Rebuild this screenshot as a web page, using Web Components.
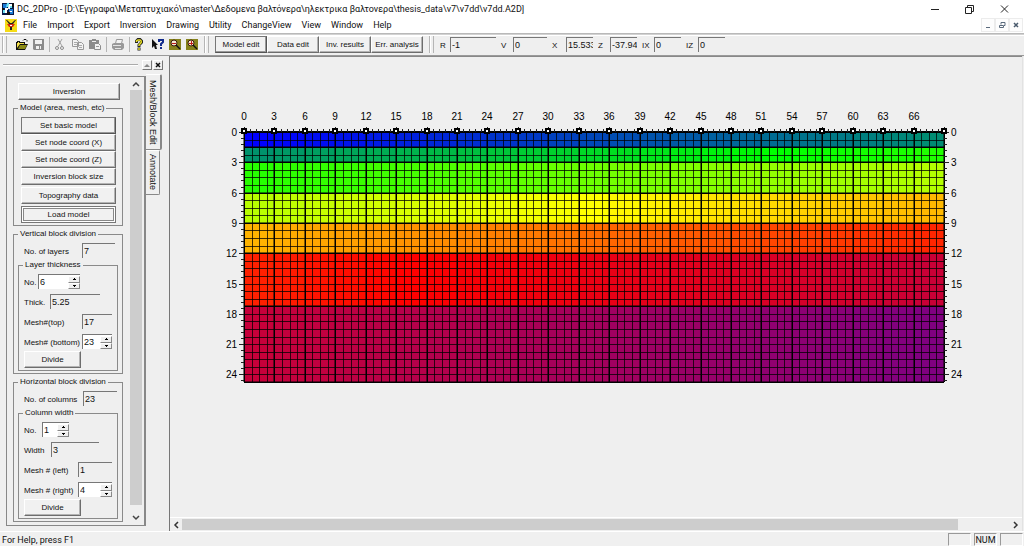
<!DOCTYPE html>
<html lang="en">
<head>
<meta charset="utf-8">
<title>DC_2DPro</title>
<style>
html, body { margin: 0; height: 100%; }
body { font: 9px/12px Roboto, "Noto Sans", sans-serif; color: #111; background: #efefef; }
</style>
</head>
<body>
<app-window></app-window>
<script>
const DIALOG = '8px/12px "Liberation Sans", Arial, sans-serif';
const VALUE = '9px/12px "Liberation Sans", Arial, sans-serif';

function define(name, render, ready) {
  customElements.define(name, class extends HTMLElement {
    connectedCallback() {
      if (this.shadowRoot) return;
      const root = this.attachShadow({ mode: 'open' });
      root.innerHTML = '<style>*{box-sizing:border-box}</style>' + render(this);
      if (ready) ready(this, root);
    }
  });
}

/* Raised push button; "current" draws the pressed-default frame. */
define('win-button', el => `
<style>
:host { display: block; }
button { width: 100%; height: 17px; padding: 0; margin: 0; display: block; font: ${DIALOG}; line-height: 15px; color: #111; white-space: nowrap;
  background: #f1f1f1; border: 1px solid; border-color: #fff #6d6d6d #6d6d6d #fff; border-radius: 0; box-shadow: inset -1px -1px #b4b4b4; }
:host([current]) button { border-color: #777 #555 #555 #777; box-shadow: inset -1px -1px #999; }
:host([focused]) button { border-color: #777; box-shadow: inset 1px 1px #fff, inset -1px -1px #fff, inset 2px 2px #888, inset -2px -2px #888; }
</style>
<button type="button"><slot></slot></button>`);

/* Label and sunken edit box, with optional spin arrows. */
define('edit-field', el => `
<style>
:host { display: flex; align-items: center; font: ${DIALOG}; height: 15px; }
label { flex: 1; white-space: nowrap; padding-top: 2px; }
.box { display: flex; flex: none; width: var(--w, 30px); height: 15px; border-top: 1px solid #777; border-left: 1px solid #777; }
:host([spin]) .box { background: #fff; }
input { flex: 1; min-width: 0; width: 0; height: 13px; border: 0; padding: 0 0 0 1px; background: none; font: ${VALUE}; color: #111; outline: 0; }
.spin { display: flex; flex-direction: column; width: 12px; margin: 1px 0 0; }
.spin button { flex: 1; padding: 0; margin: 0; border: 1px solid; border-color: #fff #888 #888 #fff; background: #efefef; display: flex; align-items: center; justify-content: center; }
svg { display: block; }
</style>
<label for="f">${el.getAttribute('label')}</label>
<div class="box"><input id="f" value="${el.getAttribute('value')}">${el.hasAttribute('spin') ? `
<div class="spin"><button type="button" aria-label="Increase"><svg width="3" height="2"><path d="M1 0h1v1h1v1H0V1h1z"/></svg></button><button type="button" aria-label="Decrease"><svg width="3" height="2"><path d="M0 0h3v1H2v1H1V1H0z"/></svg></button></div>` : ''}</div>`);

define('group-box', el => `
<style>
:host { display: block; min-width: 0; font: ${DIALOG}; }
fieldset { margin: 0; min-width: 0; border: 1px solid #8a8a8a; padding: var(--pad, 3px 4px 2px 4px); }
legend { padding: 0 2px; margin-left: 0; height: 12px; white-space: nowrap; }
</style>
<fieldset><legend>${el.getAttribute('legend')}</legend><slot></slot></fieldset>`);

define('title-bar', () => `
<style>
:host { display: flex; align-items: center; height: 17px; padding: 0 15px 0 2px; background: #fff; }
.logo { flex: none; margin-right: 3px; }
h1 { flex: 1; margin: 0; font: inherit; white-space: nowrap; overflow: hidden; }
.ctl { display: flex; gap: 26px; }
button { width: 9px; height: 12px; padding: 0; border: 0; background: none; }
button svg { display: block; }
</style>
<svg class="logo" width="12" height="12" viewBox="0 0 12 12"><path fill="#071a48" d="M0 0h12v12H0z"/><path fill="#1c7cd6" d="M1 1h4v4H1zM7 6h4v5H7z"/><path fill="#6be0f0" d="M5 0h2v3h3v2H6V4H4zM1 7h4v3H1z"/><path fill="#fff" d="M7 1h3v2H8v3H6zM3 5h3v2H5v3H3zM8 8h2v1H8z"/><path fill="#101010" d="M10 0h2v4h-2zM0 5h2v2H0zM5 9h3v3H5z"/></svg>
<h1>DC_2DPro - [D:\\Έγγραφα\\Μεταπτυχιακό\\master\\Δεδομενα βαλτόνερα\\ηλεκτρικα βαλτονερα\\thesis_data\\v7\\v7dd\\v7dd.A2D]</h1>
<div class="ctl">
<button aria-label="Minimize"><svg width="9" height="12"><path stroke="#222" d="M1 6.5h8"/></svg></button>
<button aria-label="Restore"><svg width="9" height="12" fill="none" stroke="#222"><path d="M.5 4.5h6v6h-6zM2.500 4V2.500h6v6H7"/></svg></button>
<button aria-label="Close"><svg width="9" height="12" stroke="#222"><path d="M1 2.500l7 7M8 2.500l-7 7"/></svg></button>
</div>`);

define('menu-bar', () => `
<style>
:host { display: flex; align-items: center; height: 16px; padding-left: 5px; background: #fff; }
svg { display: block; flex: none; }
nav { display: flex; flex: 1; margin-left: 6px; gap: 10px; }
a { color: inherit; text-decoration: none; white-space: nowrap; }
.mdi { display: flex; margin-right: 1px; }
.mdi button { width: 14px; height: 14px; margin: 0; padding: 2px; border: 1px solid #ececec; background: #fdfdfd; }
</style>
<svg width="12" height="13" viewBox="0 0 12 13"><path fill="#f5dc16" d="M0 0h12v13H0z"/><path fill="#7a6500" d="M3 2l3 3 3-3-2 5v4H5V7z"/><path fill="#d62d12" d="M2 5h8l-2 3H4z"/><path fill="#222" d="M1 1h1l3 3h2l3-3h1L8 5H4zM5 8h2v3H5z"/><path fill="#fff" d="M5 6h2v1H5z"/></svg>
<nav>${['File','Import','Export','Inversion','Drawing','Utility','ChangeView','View','Window','Help'].map(t => `<a href="#">${t}</a>`).join('')}</nav>
<div class="mdi">
<button aria-label="Minimize document"><svg width="8" height="8"><path stroke="#5a6a7c" d="M2 6.500h4"/></svg></button>
<button aria-label="Restore document"><svg width="8" height="8" fill="none" stroke="#5a6a7c"><path d="M1.500 4.500h4v2h-4zM3 3.500v-2h4v3H6"/></svg></button>
<button aria-label="Close document"><svg width="8" height="8" stroke="#4a5a6c" stroke-width="1.500"><path d="M2 2l4 4M6 2l-4 4"/></svg></button>
</div>`);

const TOOLS = [
  ['Open', 12, '<path fill="#111" d="M0 4h1V3h3v1h5v2h3l-3 6H0z"/><path fill="#f4e04a" d="M1 5h1V4h1v1h5v1H4l-3 4z"/><path fill="#8b8a16" d="M4 7h7l-2 4H2z"/><path fill="none" stroke="#111" d="M7 2.500l1-1h2l1 1v1"/>', 5],
  ['Save', 11, '<path fill="#8c8c8c" d="M0 1h11v11H1l-1-1z"/><path fill="#f2f2f2" d="M2 2h7v4H2zM3 8h5v3H3z"/><path fill="#8c8c8c" d="M6 8h1v3H6z"/>', 0],
  null,
  ['Cut', 10, '<path fill="none" stroke="#a2a2a2" d="M3 1l4 7M7 1L3 8"/><circle cx="2" cy="10" r="1.500" fill="none" stroke="#8c8c8c"/><circle cx="7" cy="10" r="1.500" fill="none" stroke="#8c8c8c"/>', 7],
  ['Copy', 12, '<path fill="#f2f2f2" stroke="#999" d="M.5 1.500h4l2 2v5h-6zM5.500 4.500h4l2 2v5h-6z"/><path stroke="#aaa" d="M2 4.500h3M2 6.500h3M7 7.500h3M7 9.500h3"/>', 5],
  ['Paste', 12, '<path fill="#8c8c8c" d="M0 2h3V1h4v1h3v9H0z"/><path fill="#eee" d="M3 3h4v1H3z"/><path fill="#f2f2f2" stroke="#8c8c8c" d="M5.500 5.500h4l2 2v4h-6z"/><path stroke="#999" d="M7 8.500h3"/>', 0],
  null,
  ['Print', 12, '<path fill="#f2f2f2" stroke="#999" d="M3.500 5.500l1-4h6l-1 4z"/><path fill="#999" d="M0 6l2-1h9l1 1v4l-2 2H2l-2-2z"/><path fill="#e4e4e4" d="M1 7h8v1H1zM3 10h6v1H3z"/>', 0],
  null,
  ['Help', 8, '<path fill="none" stroke="#222" stroke-width="3" d="M1.500 5V3l1.500-1.500h2L6.500 3v1.500L4 7v2M4 9.500v3"/><path fill="none" stroke="#e8e020" stroke-width="1.500" d="M1.500 4V3L3 2h2l1.200 1v1.500L4 7v1M4 10v2"/>', 9],
  ['Context help', 12, '<path fill="#111" d="M0 1l6 6H4l1 4H3L2 8l-2 2z"/><path fill="none" stroke="#122c8c" stroke-width="2" d="M7 4V2h4v2L9 6v2M9 9v2"/>', 5],
  ['Zoom out', 12, '<path fill="#86821c" d="M0 1h12v11H0z"/><circle cx="5" cy="5" r="3" fill="#f3e7d2" stroke="#3c1c0c"/><path stroke="#c01818" d="M3 5.500h4"/><path stroke="#111" stroke-width="1.500" d="M7 7l4 4"/>', 5],
  ['Zoom in', 12, '<path fill="#86821c" d="M0 1h12v11H0z"/><circle cx="5" cy="5" r="3" fill="#f3e7d2" stroke="#3c1c0c"/><path stroke="#c01818" d="M3 5.500h4M5.500 3v4"/><path stroke="#111" stroke-width="1.500" d="M7 7l4 4"/>', 0]
];

define('tool-bar', () => `
<style>
:host { display: flex; align-items: center; height: 23px; background: #efefef; border-top: 1px solid #b9b9b9; border-bottom: 1px solid #9a9a9a; box-shadow: inset 0 1px #d2d2d2, inset 0 2px #fff; font: ${DIALOG}; }
.grip { flex: none; width: 5px; height: 17px; border: solid #b5b5b5; border-width: 0 1px; box-shadow: inset 1px 0 #fff; }
.icons, .modes, .fields { display: flex; align-items: center; flex: none; }
.icons { width: 185px; margin-left: 9px; }
.icons button { padding: 0; border: 0; background: none; }
.icons svg { display: block; }
.icons i { width: 1px; height: 15px; margin: 0 5px; background: #b5b5b5; }
.modes { margin: 0 6px 0 6px; }
.modes win-button { width: 52px; }
.fields { margin-left: 6px; gap: 5px; }
.fields edit-field { width: var(--f); }
</style>
<div class="grip" style="margin-left:2px"></div>
<div class="icons">${TOOLS.map(t => t ? `<button type="button" aria-label="${t[0]}" style="margin-right:${t[3]}px"><svg width="${t[1]}" height="13">${t[2]}</svg></button>` : '<i></i>').join('')}</div>
<div class="grip" style="margin-left:3px"></div>
<div class="modes"><win-button current>Model edit</win-button><win-button>Data edit</win-button><win-button>Inv. results</win-button><win-button>Err. analysis</win-button></div>
<div class="grip"></div>
<div class="fields">
<edit-field label="R" value="-1" style="--f:56px;--w:46px"></edit-field>
<edit-field label="V" value="0" style="--f:46px;--w:34px"></edit-field>
<edit-field label="X" value="15.533" style="--f:41px;--w:27px"></edit-field>
<edit-field label="Z" value="-37.94" style="--f:39px;--w:27px"></edit-field>
<edit-field label="IX" value="0" style="--f:39px;--w:27px"></edit-field>
<edit-field label="IZ" value="0" style="--f:39px;--w:27px"></edit-field>
</div>`);

define('model-form', () => `
<style>
:host { display: block; font: ${DIALOG}; }
form { display: flex; flex-direction: column; }
.top { margin: 0 3px 2px 5px; }
.outer { --pad: 3px 4px 2px 4px; margin-bottom: 2px; }
.buttons { display: grid; padding: 0 2px 0 3px; }
.buttons .apart { margin-top: 2px; }
.count { margin: 0 var(--end) 1px 6px; }
.rows { display: grid; gap: 5px; padding: 0 1px; }
.rows .divide { width: 57px; margin-top: -3px; }
</style>
<form>
<win-button class="top">Inversion</win-button>
<group-box class="outer" legend="Model (area, mesh, etc)"><div class="buttons">
<win-button current>Set basic model</win-button><win-button>Set node coord (X)</win-button><win-button>Set node coord (Z)</win-button><win-button>Inversion block size</win-button><win-button class="apart">Topography data</win-button><win-button class="apart" focused>Load model</win-button>
</div></group-box>
<group-box class="outer" legend="Vertical block division">
<edit-field class="count" label="No. of layers" value="7" style="--w:33px;--end:3px"></edit-field>
<group-box legend="Layer thickness"><div class="rows">
<edit-field label="No." value="6" spin style="--w:42px;width:56px"></edit-field>
<edit-field label="Thick." value="5.25" style="--w:50px;width:76px"></edit-field>
<edit-field label="Mesh#(top)" value="17"></edit-field>
<edit-field label="Mesh# (bottom)" value="23" spin></edit-field>
<win-button class="divide">Divide</win-button>
</div></group-box>
</group-box>
<group-box class="outer" legend="Horizontal block division">
<edit-field class="count" label="No. of columns" value="23" style="--w:34px;--end:1px"></edit-field>
<group-box legend="Column width"><div class="rows">
<edit-field label="No." value="1" spin style="--w:27px;width:45px"></edit-field>
<edit-field label="Width" value="3" style="--w:48px;width:75px"></edit-field>
<edit-field label="Mesh # (left)" value="1" style="--w:34px"></edit-field>
<edit-field label="Mesh # (right)" value="4" spin style="--w:34px"></edit-field>
<win-button class="divide">Divide</win-button>
</div></group-box>
</group-box>
</form>`);

define('side-dock', () => `
<style>
:host { display: flex; flex-direction: column; flex: none; width: 170px; padding-top: 3px; border-right: 1px solid #777; font: ${DIALOG}; }
.head { display: flex; align-items: center; gap: 1px; padding: 0 6px 0 3px; height: 11px; }
.head hr { flex: 1; margin: 0 3px 0 0; border: 0; border-top: 1px solid #aaa; border-bottom: 1px solid #fff; }
.head button { width: 10px; height: 10px; padding: 1px; border: 1px solid; border-color: #fff #777 #777 #fff; background: #efefef; }
.head svg { display: block; }
.body { display: flex; flex: 1; padding: 4px 0 5px 6px; min-height: 0; align-items: flex-start; }
.page { display: flex; align-self: stretch; width: 140px; margin-top: 2px; border: 1px solid #888; border-width: 1px 2px 1px 1px; overflow: hidden; }
model-form { width: 110px; margin: 6px 7px 0 6px; flex: none; }
.scroll { display: flex; flex-direction: column; width: 12px; align-items: stretch; margin-right: 2px; }
.scroll svg { display: block; flex: none; }
.thumb { flex: 1; background: #cdcdcd; }
.tabs { display: flex; flex-direction: column; align-items: flex-start; }
.tabs button { writing-mode: vertical-rl; font: ${VALUE}; color: #111; padding: 0; background: #efefef; border: 1px solid #888; border-left: 0; border-top-color: #fff; border-radius: 0 2px 2px 0; width: 14px; height: 45px; white-space: nowrap; }
.tabs .on { width: 16px; height: 76px; border-right-width: 2px; }
</style>
<div class="head"><hr><button aria-label="Collapse"><svg width="6" height="6"><path fill="#888" d="M3 2l3 3H0z"/></svg></button><button aria-label="Close panel"><svg width="6" height="6" stroke="#111"><path stroke-width="1.500" d="M1 1l4 4M5 1L1 5"/></svg></button></div>
<div class="body"><div class="page"><model-form></model-form>
<div class="scroll"><svg width="12" height="13" fill="none" stroke="#444"><path stroke-width="1.500" d="M3 9l3-3 3 3"/></svg><div class="thumb"></div><svg width="12" height="20" fill="none" stroke="#444"><path stroke-width="1.500" d="M3 11l3 3 3-3"/></svg></div></div>
<div class="tabs" role="tablist"><button role="tab" class="on">Mesh/Block Edit</button><button role="tab">Annotate</button></div></div>`);

/* Finite-element mesh: 23 x 7 blocks, each block four cells wide. */
define('mesh-chart', () => `
<style>
:host { display: block; font: 10px "Liberation Sans", Arial, sans-serif; }
svg { display: block; }
</style>
<svg width="750" height="287" shape-rendering="crispEdges" role="img" aria-label="Block model"></svg>`,
(el, root) => {
  const X0 = 24, Y0 = 27, W = 700, H = 250, COLS = 69, DEPTH = 24.75;
  const px = x => X0 + Math.round(x * W / COLS);
  const py = y => Y0 + Math.round(y * H / DEPTH);
  const depths = [0, 1.5, 3, 6, 9, 12, 17.25, 24.75];
  const stops = [[0, 0, 255], [0, 255, 0], [255, 255, 0], [255, 0, 0], [128, 0, 128]];
  const colour = t => {
    const k = Math.min(3, Math.floor(t * 4)), f = t * 4 - k;
    return `rgb(${stops[k].map((c, j) => Math.round(c + (stops[k + 1][j] - c) * f))})`;
  };
  const rect = (x, y, w, h, f, o = 1) => `<rect x="${x}" y="${y}" width="${w}" height="${h}" fill="${f}" fill-opacity="${o}"/>`;
  let s = '';
  for (let r = 0; r < 7; r++)
    for (let c = 0; c < 23; c++) {
      const x = px(c * 3), y = py(depths[r]);
      s += rect(x, y, px(c * 3 + 3) - x, py(depths[r + 1]) - y, colour((r * 23 + c) / 160));
    }
  for (let i = 0; i <= 92; i++) {
    const major = i % 4 === 0, x = px(i * 0.75);
    s += rect(x, Y0, 1, H, '#000', major ? 1 : 0.75);
    if (major) s += rect(x - 1, Y0, 1, H, '#000', 0.5);
  }
  for (let i = 0; i <= 33; i++) {
    const d = i * 0.75, y = py(d), major = depths.includes(d);
    s += rect(X0, y, W, 1, '#000', major ? 1 : 0.75);
    if (major) s += rect(X0, y - 1, W, 1, '#000', 0.5);
  }
  s += rect(X0, Y0 - 1, W, 1, '#000');
  for (let i = 0; i <= 115; i++) s += rect(px(i * 0.6), Y0 - 3, 1, 3, '#222');
  for (let i = 0; i <= 41; i++) {
    const y = py(i * 0.6), n = i % 5 === 0 ? 5 : 3;
    s += rect(X0 - n, y, n, 1, '#222') + rect(X0 + W, y, n, 1, '#222');
  }
  for (let v = 0; v <= 69; v += 3) {
    const x = px(v);
    s += rect(x - 3, Y0 - 4, 6, 6, '#000') + rect(x - 1, Y0 - 2, 2, 2, '#fff') + rect(x, Y0 - 5, 1, 1, '#222');
    if (v < 69) s += `<text x="${x}" y="${Y0 - 12}" text-anchor="middle">${v}</text>`;
  }
  for (let v = 0; v <= 24; v += 3)
    s += `<text x="${X0 - 7}" y="${py(v) + 4}" text-anchor="end">${v}</text><text x="${X0 + W + 7}" y="${py(v) + 4}">${v}</text>`;
  root.querySelector('svg').innerHTML = s;
});

define('model-view', () => `
<style>
:host { display: flex; flex-direction: column; flex: 1; min-width: 0; margin-right: 1px; border-right: 1px solid #e2e2e2; background: #efefef; }
.canvas { flex: 1; min-height: 0; overflow: hidden; padding: 48px 0 0 50px; border-top: 1px solid #888; }
.hbar { display: flex; align-items: center; height: 14px; border-top: 1px solid #fff; }
.hbar i { flex: 1; height: 11px; background: #cdcdcd; }
.hbar svg { flex: none; }
</style>
<div class="canvas"><mesh-chart></mesh-chart></div>
<div class="hbar"><svg width="12" height="11" fill="none" stroke="#333"><path stroke-width="1.500" d="M8 3L5 6l3 3"/></svg><i></i><svg width="64" height="11" fill="none" stroke="#333"><path stroke-width="1.500" d="M56 3l3 3-3 3"/></svg></div>`);

define('status-bar', () => `
<style>
:host { display: flex; align-items: center; height: 15px; padding: 0 1px 0 2px; gap: 3px; background: #f0f0f0; border-top: 1px solid #fff; }
p { flex: 1; margin: 0; padding-top: 2px; }
span { width: 23px; height: 13px; text-align: center; border: 1px solid; border-color: #999 #fff #fff #999; }
</style>
<p>For Help, press F1</p><span></span><span>NUM</span><span></span>`);

define('app-window', () => `
<style>
:host { display: flex; flex-direction: column; min-height: 100vh; background: #efefef; }
main { display: flex; flex: 1; min-height: 0; }
</style>
<title-bar></title-bar><menu-bar></menu-bar><tool-bar></tool-bar>
<main><side-dock></side-dock><model-view></model-view></main>
<status-bar></status-bar>`);
</script>
</body>
</html>
